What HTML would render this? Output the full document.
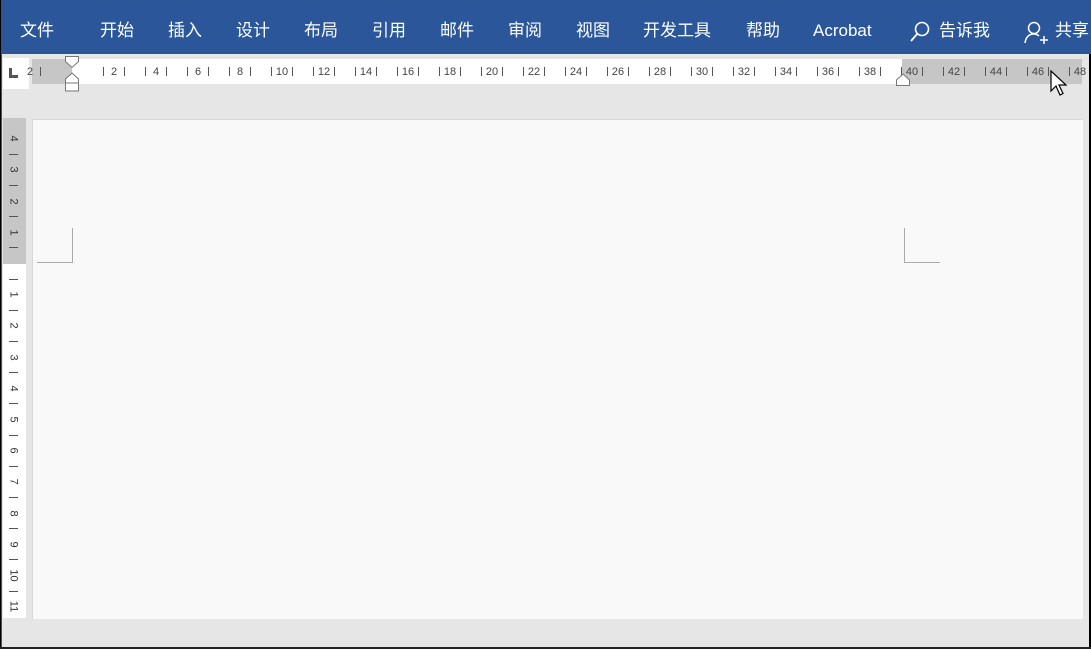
<!DOCTYPE html>
<html><head><meta charset="utf-8"><style>
*{margin:0;padding:0;box-sizing:border-box}
body{width:1091px;height:649px;overflow:hidden;background:#e6e6e6;position:relative;font-family:"Liberation Sans","Noto Sans CJK SC",sans-serif}
.a{position:absolute}
#top{left:0;top:0;width:1091px;height:54px;background:#2b579a}
.m{position:absolute;top:20px;color:#fff;font-size:17px;line-height:22px;white-space:nowrap}
.t{position:absolute;font-size:11px;color:#444;line-height:12px}
.hl{position:absolute;width:1px;height:9px;background:#555;top:67px}
.vt{position:absolute;left:9px;width:9px;height:1px;background:#555}
.vl{position:absolute;left:6px;width:14px;font-size:11px;color:#333;transform:rotate(90deg);text-align:center;line-height:11px}
</style></head><body>
<div class="a" id="top"></div>
<div class="m" style="left:20px">文件</div>
<div class="m" style="left:100px">开始</div>
<div class="m" style="left:168px">插入</div>
<div class="m" style="left:236px">设计</div>
<div class="m" style="left:304px">布局</div>
<div class="m" style="left:372px">引用</div>
<div class="m" style="left:440px">邮件</div>
<div class="m" style="left:508px">审阅</div>
<div class="m" style="left:576px">视图</div>
<div class="m" style="left:643px">开发工具</div>
<div class="m" style="left:746px">帮助</div>
<div class="m" style="left:813px">Acrobat</div>
<svg class="a" style="left:908px;top:20px" width="24" height="24" viewBox="0 0 24 24"><circle cx="14" cy="9" r="6.5" fill="none" stroke="#fff" stroke-width="1.6"/><line x1="9.5" y1="13.5" x2="3" y2="21" stroke="#fff" stroke-width="1.8"/></svg>
<div class="m" style="left:939px">告诉我</div>
<svg class="a" style="left:1023px;top:20px" width="28" height="26" viewBox="0 0 28 26"><circle cx="11" cy="8" r="5.5" fill="none" stroke="#fff" stroke-width="1.5"/><path d="M2 23 C3 16 7 14 11 14 C13 14 15 15 16 16" fill="none" stroke="#fff" stroke-width="1.5"/><path d="M17 20h8M21 16v8" stroke="#fff" stroke-width="1.5"/></svg>
<div class="m" style="left:1055px">共享</div>
<div class="a" style="left:0;top:0;width:1px;height:649px;background:#000"></div>
<div class="a" style="left:1px;top:54px;width:1px;height:595px;background:#2b579a"></div>
<div class="a" style="left:1089px;top:54px;width:2px;height:595px;background:#000"></div>
<div class="a" style="left:0;top:647px;width:1091px;height:2px;background:#222"></div>
<div class="a" style="left:3px;top:58px;width:26px;height:31px;background:#fff"></div>
<div class="a" style="left:9px;top:68px;width:3px;height:10px;background:#555"></div>
<div class="a" style="left:9px;top:75px;width:9px;height:3px;background:#555"></div>
<div class="a" style="left:32px;top:59px;width:1050px;height:25px;background:#fff"></div>
<div class="a" style="left:32px;top:59px;width:40px;height:25px;background:#c6c6c6"></div>
<div class="a" style="left:902px;top:59px;width:180px;height:25px;background:#c6c6c6"></div>
<div id="hr"></div>
<svg class="a" style="left:64px;top:55px" width="16" height="38"><path d="M1.5 1.5h13v5l-6.5 6 -6.5-6z" fill="#fff" stroke="#777"/><path d="M8 18l6.5 6v4h-13v-4z" fill="#fff" stroke="#777"/><rect x="1.5" y="28" width="13" height="8" fill="#fff" stroke="#777"/></svg>
<svg class="a" style="left:895px;top:73px" width="16" height="14"><path d="M8 1l6.5 6v5.5h-13V7z" fill="#fff" stroke="#777"/></svg>
<div class="a" style="left:3px;top:118px;width:23px;height:500px;background:#fff"></div>
<div class="a" style="left:3px;top:118px;width:23px;height:146px;background:#c6c6c6"></div>
<div id="vr"></div>
<div class="a" style="left:32px;top:119px;width:1051px;height:500px;background:#f9f9f9;border:1px solid #d8d8d8;border-right:none;border-bottom:none"></div>
<div class="a" style="left:72px;top:228px;width:1px;height:35px;background:#aaa"></div>
<div class="a" style="left:37px;top:262px;width:36px;height:1px;background:#aaa"></div>
<div class="a" style="left:904px;top:228px;width:1px;height:35px;background:#aaa"></div>
<div class="a" style="left:904px;top:262px;width:36px;height:1px;background:#aaa"></div>
<svg class="a" style="left:1050px;top:70px" width="20" height="28" viewBox="0 0 20 28"><path d="M1 1v20l5-5 4 9 3-1.5-4-8.5h7z" fill="#fff" stroke="#000" stroke-width="1.2"/></svg>
<script>
var h='';
for(var n=-2;n<=48;n+=2){var x=72+21*n;
 if(x>=30&&x<1085&&n!=0)h+='<div class="t" style="left:'+(x-10)+'px;top:66px;width:20px;text-align:center">'+Math.abs(n)+'</div>';
 [x-11,x+10].forEach(function(t){if(t>34&&t<1082&&n!=0)h+='<div class="hl" style="left:'+t+'px"></div>';});
}
document.getElementById('hr').innerHTML=h;
var v='';
for(var k=-4;k<=11;k++){var y=263+31.2*k;
 if(k!=0)v+='<div class="vl" style="top:'+(y-5)+'px">'+Math.abs(k)+'</div>';
 var ty=y+15.6; if(ty>120&&ty<612)v+='<div class="vt" style="top:'+Math.round(ty)+'px"></div>';
}
document.getElementById('vr').innerHTML=v;
</script>
</body></html>
